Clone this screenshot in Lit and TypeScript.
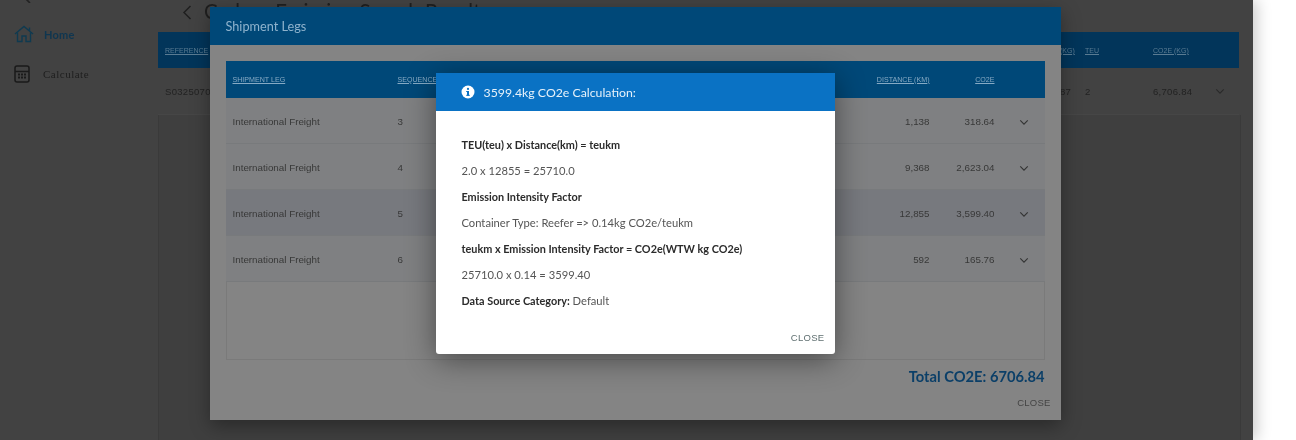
import { LitElement, html, css } from "lit";
import { customElement } from "lit/decorators.js";
import { classMap } from "lit/directives/class-map.js";

const chevron = html`<svg class="chev" viewBox="0 0 12 8" width="10" height="7"><path d="M1.5 1.5 L6 6 L10.5 1.5" fill="none" stroke="currentColor" stroke-width="1.3"/></svg>`;

const legs = [
  ["3", "1,138", "318.64", false],
  ["4", "9,368", "2,623.04", false],
  ["5", "12,855", "3,599.40", true],
  ["6", "592", "165.76", false],
] as const;

@customElement("app-root")
export class AppRoot extends LitElement {
  static styles = css`
    :host { display: block; position: relative; width: 1296px; height: 440px; overflow: hidden; background: #fff; font-family: "Liberation Sans", Arial, sans-serif; filter: blur(.35px); }
    .page { width: 1253px; height: 440px; background: #424242; display: flex; box-shadow: 4px 0 14px rgba(0,0,0,.2); }
    .side { width: 158px; flex: none; padding-top: 22px; box-sizing: border-box; }
    .top-chev { position: absolute; left: 20px; top: -11px; color: #222; }
    .nav { display: flex; align-items: center; height: 24px; margin-bottom: 16px; padding-left: 14px; gap: 10px; letter-spacing: .2px; }
    .nav.home { color: #0f3650; font-weight: 700; font-family: "Lato", sans-serif; font-size: 11px; }
    .nav.calc { color: #1e1e1e; font-family: "Liberation Serif", serif; font-size: 11px; gap: 13px; letter-spacing: .5px; }
    .main { flex: 1; display: flex; flex-direction: column; padding-right: 14px; }
    .titlebar { height: 32px; display: flex; align-items: flex-start; padding-left: 24px; gap: 12px; color: #1f1f1f; font-family: "Lato", sans-serif; font-size: 20.5px; line-height: 22px; }
    .titlebar span { white-space: nowrap; }
    .titlebar svg { margin-top: 5px; flex: none; }
    .mgrid { display: grid; grid-template-columns: 895px 25px 68px 1fr; align-items: center; padding-left: 7px; }
    .mhead { height: 36px; flex: none; background: #02355a; color: #5a7b92; font-size: 7px; text-decoration: underline; }
    .mrow { height: 46px; flex: none; font-size: 9.5px; color: #222; border-bottom: 1px solid #464646; letter-spacing: .3px; }
    .mrow .last { display: flex; justify-content: space-between; padding-right: 14px; }
    .mrow .chev { margin: 2px 0 0; color: #2a2a2a; }
    .mbody { flex: 1; border: solid #3a3a3a; border-width: 0 1px; margin-right: -2px; background: #3f3f3f; }

    .dialog { position: absolute; box-sizing: border-box; display: flex; flex-direction: column; }
    .legs { left: 209.5px; top: 7px; width: 851px; height: 413px; background: #848484; box-shadow: 0 6px 18px rgba(0,0,0,.35); }
    .legs-title { height: 38px; flex: none; background: #004878; color: #8fb3cd; font-family: "Lato", sans-serif; font-size: 12.7px; display: flex; align-items: center; padding-left: 16px; }
    .legs-body { flex: 1; padding: 16px 16px 0; display: flex; flex-direction: column; }
    .thead, .trow { display: grid; grid-template-columns: 165px 1fr 80px 65px 50px; align-items: center; padding-left: 7px; }
    .thead { height: 37px; flex: none; background: #004878; color: #86aac4; font-size: 7.1px; text-decoration: underline; }
    .trow { height: 46px; flex: none; box-sizing: border-box; padding-top: 1px; font-size: 9.8px; color: #383838; border-bottom: 1px solid #787a7c; background: #7f8082; }
    .trow.sel { background: #77797e; }
    .num { text-align: right; }
    .chev { color: #333; margin: 2px 0 0 24px; }
    .empty { height: 77px; flex: none; border: 1px solid #7a7a7a; border-top: 0; }
    .total { text-align: right; color: #0b3f68; font-family: "Lato", sans-serif; font-weight: 700; font-size: 14.7px; line-height: 20px; margin-top: 6px; }
    .legs-close { text-align: right; color: #444; font-size: 9.5px; letter-spacing: .2px; margin: 11px -6px 0 0; }

    .calc-d { left: 435.5px; top: 73px; width: 399px; height: 281px; background: #fff; border-radius: 0 0 3px 3px; box-shadow: 0 6px 30px rgba(0,0,0,.45); }
    .calc-title { height: 38px; flex: none; background: #0a72c4; color: #e6f1fa; font-family: "Lato", sans-serif; font-size: 12.3px; display: flex; align-items: center; gap: 9px; padding-left: 25px; }
    .calc-body { padding: 21px 26px 0; flex: 1; font-family: "Lato", sans-serif; font-size: 11.2px; color: #555; line-height: 26px; }
    .calc-body div { height: 26px; white-space: nowrap; }
    b { color: #2b2b2b; font-weight: 700; font-size: 10.85px; }
    .calc-close { text-align: right; padding: 0 10px 11px 0; color: #5f6f70; font-size: 9.5px; letter-spacing: .3px; }
  `;

  render() {
    return html`
      <div class="page">
        <div class="side">
          <svg class="top-chev" width="14" height="14" viewBox="0 0 14 14"><path d="M10 2 L4 8 L10 14" fill="none" stroke="currentColor" stroke-width="1.6"/></svg>
          <div class="nav home">
            <svg width="20" height="18" viewBox="0 0 20 18" fill="none" stroke="#0f3a50" stroke-width="1.4"><path d="M1 9 L10 1.5 L19 9"/><path d="M15.5 2.5 V6"/><path d="M3.5 7.5 V16.5 H8 V11 H12 V16.5 H16.5 V7.5"/></svg>
            <span>Home</span>
          </div>
          <div class="nav calc">
            <svg width="16" height="18" viewBox="0 0 16 18" fill="none"><rect x="1" y="1" width="14" height="16" rx="2" stroke="#1a1a1a" stroke-width="1.5"/><path d="M1 6.5 H15" stroke="#1a1a1a" stroke-width="1.5"/><path d="M4 9.5 H12 M4 12.5 H12" stroke="#1a1a1a" stroke-width="1.8" stroke-dasharray="2 1"/></svg>
            <span>Calculate</span>
          </div>
        </div>
        <div class="main">
          <div class="titlebar">
            <svg width="10" height="15" viewBox="0 0 10 15"><path d="M8.5 1 L2 7.5 L8.5 14" fill="none" stroke="#1f1f1f" stroke-width="1.5"/></svg>
            <span>Carbon Emission Search Results</span>
          </div>
          <div class="mgrid mhead">
            <span>REFERENCE</span><span>(KG)</span><span>TEU</span><span>CO2E (KG)</span>
          </div>
          <div class="mgrid mrow">
            <span>S0325070</span><span>87</span><span>2</span>
            <span class="last"><span>6,706.84</span>${chevron}</span>
          </div>
          <div class="mbody"></div>
        </div>
      </div>

      <div class="dialog legs">
        <div class="legs-title">Shipment Legs</div>
        <div class="legs-body">
          <div class="thead">
            <span>SHIPMENT LEG</span><span>SEQUENCE</span>
            <span class="num">DISTANCE (KM)</span><span class="num">CO2E</span><span></span>
          </div>
          ${legs.map(([s, d, c, sel]) => html`
            <div class=${classMap({ trow: true, sel })}>
              <span>International Freight</span><span>${s}</span>
              <span class="num">${d}</span><span class="num">${c}</span>${chevron}
            </div>`)}
          <div class="empty"></div>
          <div class="total">Total CO2E: 6706.84</div>
          <div class="legs-close">CLOSE</div>
        </div>
      </div>

      <div class="dialog calc-d">
        <div class="calc-title">
          <svg width="14" height="14" viewBox="0 0 14 14"><circle cx="7" cy="7" r="6.5" fill="#fff"/><rect x="6" y="6" width="2" height="4.6" fill="#0a72c4"/><rect x="5.2" y="6" width="2.4" height="1" fill="#0a72c4"/><rect x="5.2" y="9.8" width="3.6" height="1" fill="#0a72c4"/><circle cx="7" cy="3.9" r="1.1" fill="#0a72c4"/></svg>
          <span>3599.4kg CO2e Calculation:</span>
        </div>
        <div class="calc-body">
          <div><b>TEU(teu) x Distance(km) = teukm</b></div>
          <div>2.0 x 12855 = 25710.0</div>
          <div><b>Emission Intensity Factor</b></div>
          <div>Container Type: Reefer =&gt; 0.14kg CO2e/teukm</div>
          <div><b>teukm x Emission Intensity Factor = CO2e(WTW kg CO2e)</b></div>
          <div>25710.0 x 0.14 = 3599.40</div>
          <div><b>Data Source Category:</b> Default</div>
        </div>
        <div class="calc-close">CLOSE</div>
      </div>
    `;
  }
}
